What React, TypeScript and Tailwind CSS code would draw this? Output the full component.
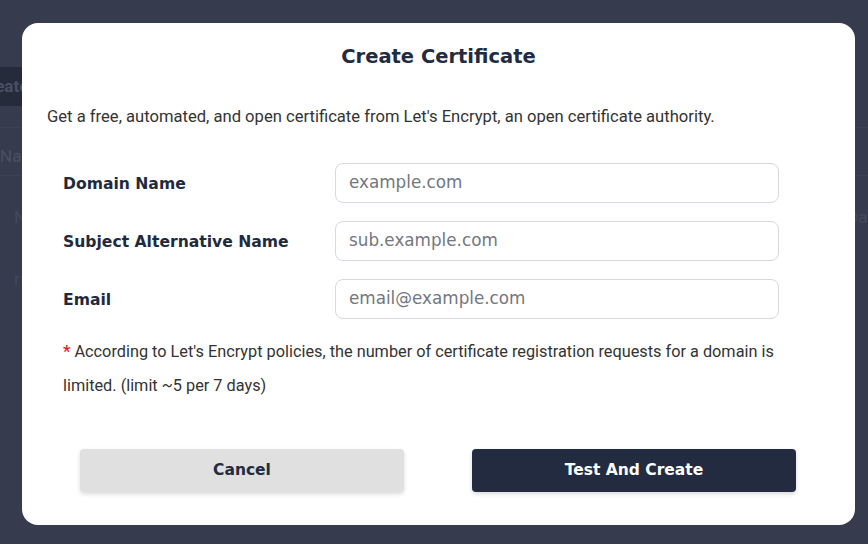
import React from "react";

const mont = { fontFamily: '"DejaVu Sans", "Noto Sans", sans-serif' };

function Row({ label, placeholder }: { label: string; placeholder: string }) {
  return (
    <div className="flex items-center">
      <div className="w-[272px] pt-[3px] text-[15.6px] font-bold text-[#1f2a3d]" style={mont}>
        {label}
      </div>
      <div className="w-[444px] h-[40px] rounded-[8px] border border-[#d6d9e0] flex items-center px-[13px]">
        <span className="text-[16.8px] text-[#737780]" style={mont}>{placeholder}</span>
      </div>
    </div>
  );
}

export default function App() {
  return (
    <div className="relative w-[868px] h-[544px] overflow-hidden bg-[#363c4d] font-['Roboto',sans-serif]">
      {/* underlying page (dimmed) */}
      <div className="flex flex-col pt-[67px]">
        <div className="w-[60px] h-[39px] bg-[#252b3b] flex items-center text-[17px] font-bold text-[#4a5063] whitespace-nowrap overflow-hidden">
          <span className="-ml-[22px]">Create</span>
        </div>
        <div className="mt-[21px] h-px bg-[#3c4254]" />
        <div className="h-[47px] pt-[18px] leading-[20px] text-[17px] text-[#4a5063]">Name</div>
        <div className="h-px bg-[#3c4254]" />
        <div className="h-[84px] flex items-center pl-[14px] text-[17px] text-[#434a5c] justify-between">
          <span>N</span>
          <span className="-mr-[14px]">Date</span>
        </div>
        <div className="h-[40px] flex items-center pl-[14px] text-[17px] text-[#434a5c]">r</div>
      </div>

      {/* modal */}
      <div className="absolute left-[22px] top-[23px] w-[833px] h-[502px] rounded-[16px] bg-white flex flex-col">
        <div className="pt-[20px] text-center text-[19.5px] leading-[28px] font-bold text-[#222b3f]" style={mont}>
          Create Certificate
        </div>
        <div className="mt-[34px] pl-[25px] text-[16.6px] leading-[24px] text-[#333333]">
          Get a free, automated, and open certificate from Let's Encrypt, an open certificate authority.
        </div>
        <div className="mt-[34px] pl-[41px] flex flex-col gap-[18px]">
          <Row label="Domain Name" placeholder="example.com" />
          <Row label="Subject Alternative Name" placeholder="sub.example.com" />
          <Row label="Email" placeholder="email@example.com" />
        </div>
        <div className="mt-[16px] pl-[41px] pr-[60px] text-[16.3px] leading-[34px] text-[#333333]">
          <span className="text-[#e0242a] font-bold">*</span> According to Let's Encrypt policies, the number of certificate registration requests for a domain is limited. (limit ~5 per 7 days)
        </div>
        <div className="mt-[46px] flex justify-between pl-[58px] pr-[59px]">
          <div className="w-[324px] h-[43px] rounded-[4px] bg-[#e0e0e0] shadow-[0_2px_4px_rgba(0,0,0,0.15)] flex items-center justify-center text-[15.5px] font-bold text-[#222b3f]" style={mont}>
            Cancel
          </div>
          <div className="w-[324px] h-[43px] rounded-[4px] bg-[#222b3f] shadow-[0_2px_4px_rgba(0,0,0,0.15)] flex items-center justify-center text-[15.5px] font-bold text-white" style={mont}>
            Test And Create
          </div>
        </div>
      </div>
    </div>
  );
}
